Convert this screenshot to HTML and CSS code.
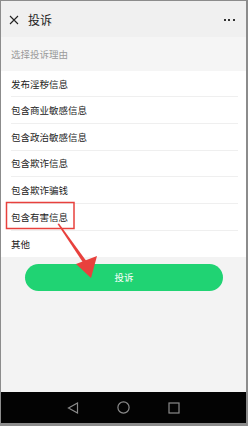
FILE: index.html
```html
<!DOCTYPE html>
<html lang="zh">
<head>
<meta charset="utf-8">
<link rel="stylesheet" href="styles.css">
</head>
<body>
<div class="frame">
  <div class="header">
    <svg class="close" width="10" height="10" viewBox="0 0 10 10"><path d="M1 1 L9 9 M9 1 L1 9" stroke="#222" stroke-width="1.1" fill="none"/></svg>
    <span class="title">投诉</span>
    <span class="dots"><i></i><i></i><i></i></span>
  </div>
  <div class="label">选择投诉理由</div>
  <ul class="list">
    <li>发布淫秽信息</li>
    <li>包含商业敏感信息</li>
    <li>包含政治敏感信息</li>
    <li>包含欺诈信息</li>
    <li>包含欺诈骗钱</li>
    <li>包含有害信息</li>
    <li>其他</li>
  </ul>
  <div class="bottom">
    <button class="submit">投诉</button>
  </div>
  <div class="nav">
    <svg width="12" height="12" viewBox="0 0 12 12"><path d="M10.5 1 L10.5 11 L1.5 6 Z" fill="none" stroke="#8a8a8a" stroke-width="1.2"/></svg>
    <svg width="13" height="13" viewBox="0 0 13 13"><circle cx="6.5" cy="6.5" r="5.6" fill="none" stroke="#8a8a8a" stroke-width="1.2"/></svg>
    <svg width="12" height="12" viewBox="0 0 12 12"><rect x="1" y="1" width="10" height="10" fill="none" stroke="#8a8a8a" stroke-width="1.2"/></svg>
  </div>
  <svg class="annot" width="248" height="426" viewBox="0 0 248 426">
    <rect x="6.5" y="202.5" width="67.5" height="26" fill="none" stroke="#e8413d" stroke-width="1.5"/>
    <path d="M57.5 224 L59 223.5 L87 262 L84 264 Z" fill="#e8413d"/>
    <path d="M76 264 L97 256 L91 278 Z" fill="#e8413d"/>
  </svg>
</div>
</body>
</html>
```

FILE: styles.css
```css
html, body {
  margin: 0;
  padding: 0;
}
body {
  font-family: "Noto Sans CJK SC", "Noto Sans", sans-serif;
}
.frame {
  position: relative;
  width: 248px;
  height: 426px;
  box-sizing: border-box;
  border: 1px solid #8c8c8c;
  border-right-width: 2px;
  border-bottom-width: 3px;
  display: flex;
  flex-direction: column;
  background: #f3f3f3;
  overflow: hidden;
}
.header {
  height: 36px;
  flex: none;
  background: #f0f0f0;
  display: flex;
  align-items: center;
  padding-left: 8px;
  padding-right: 11px;
}
.close {
  display: block;
  margin-right: 9px;
  margin-top: 2px;
}
.title {
  font-size: 12px;
  color: #222;
  line-height: 1;
  margin-top: 1px;
}
.dots {
  margin-left: auto;
  display: flex;
  gap: 2.4px;
  margin-top: 2px;
}
.dots i {
  display: block;
  width: 2.2px;
  height: 2.2px;
  background: #333;
}
.label {
  height: 33.7px;
  flex: none;
  background: #f5f5f5;
  box-sizing: border-box;
  padding-left: 10px;
  display: flex;
  align-items: center;
  font-size: 9.5px;
  color: #9a9a9a;
}
.list {
  list-style: none;
  margin: 0;
  padding: 0;
  background: #fff;
  flex: none;
}
.list li {
  height: 26.67px;
  box-sizing: border-box;
  margin-left: 10px;
  margin-right: 8px;
  display: flex;
  align-items: center;
  font-size: 9.5px;
  color: #222;
  border-bottom: 1px solid #efefef;
}
.list li:last-child {
  border-bottom: none;
}
.bottom {
  flex: 1;
  background: #f3f3f3;
  padding-top: 6.7px;
}
.submit {
  display: block;
  margin-left: 24px;
  width: 198px;
  height: 27px;
  border: none;
  border-radius: 14px;
  background: #20d373;
  color: #fff;
  font-family: "Noto Sans CJK SC", sans-serif;
  font-size: 9.5px;
  padding: 0;
}
.nav {
  height: 31px;
  flex: none;
  background: #030303;
  display: flex;
  align-items: center;
  justify-content: center;
  gap: 38px;
}
.nav svg {
  display: block;
}
.annot {
  position: absolute;
  left: -1px;
  top: -1px;
  pointer-events: none;
}
```
